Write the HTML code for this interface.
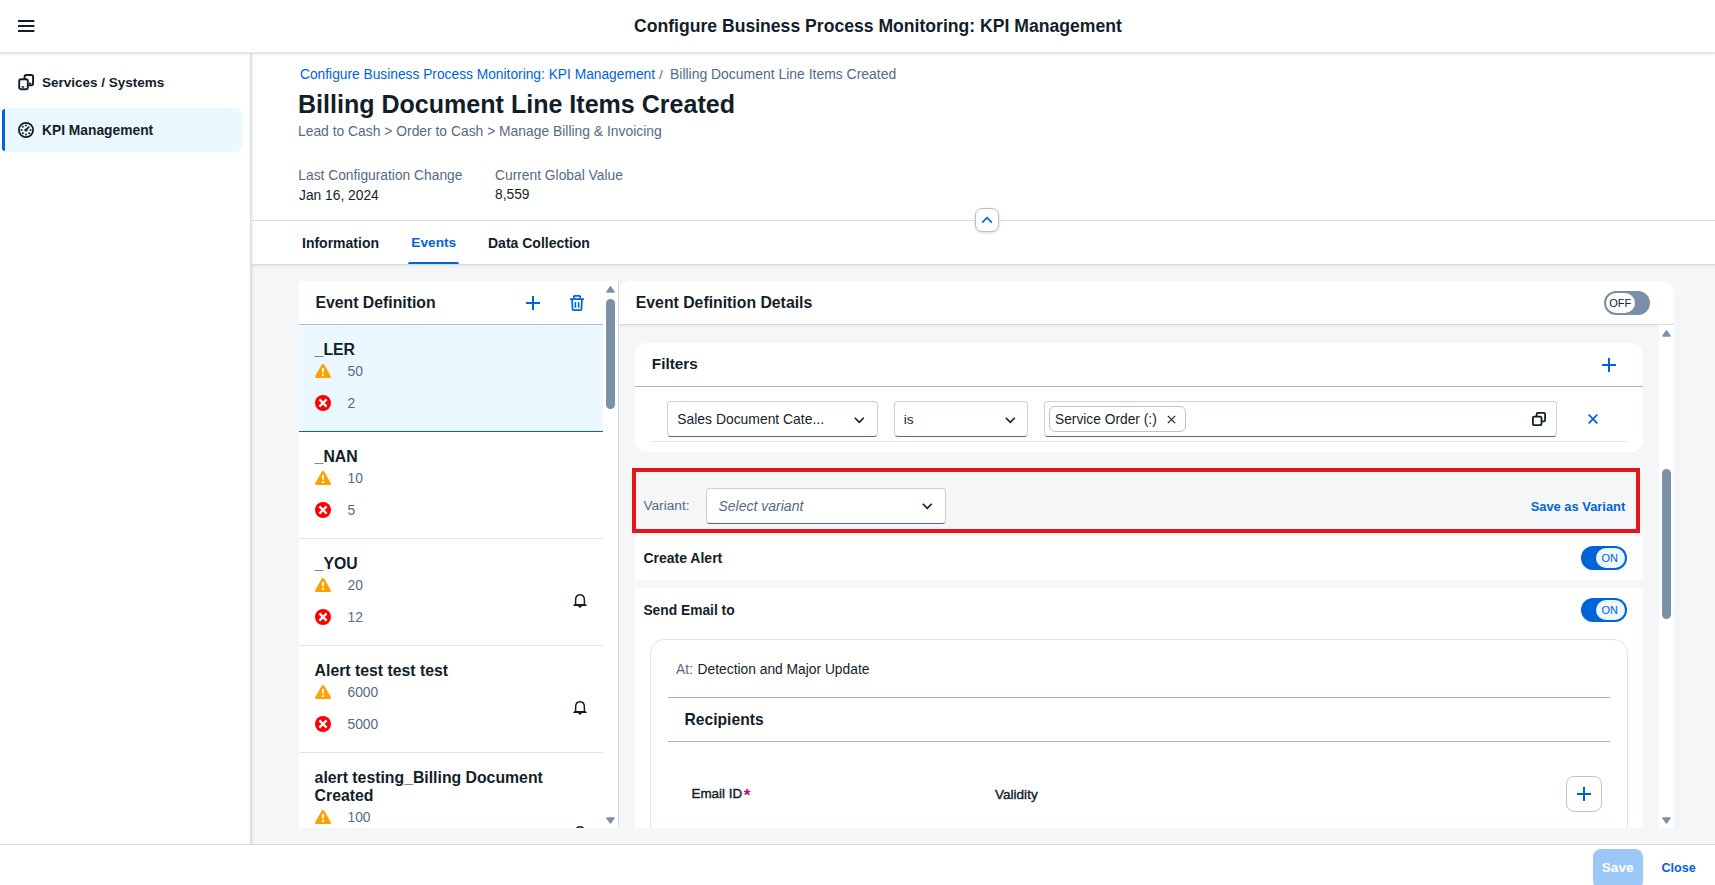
<!DOCTYPE html>
<html><head><meta charset="utf-8">
<style>
*{box-sizing:border-box;margin:0;padding:0}
html,body{width:1715px;height:885px;overflow:hidden;background:#fff;font-family:"Liberation Sans",sans-serif;color:#131e29}
.a{position:absolute;white-space:nowrap}
.b{font-weight:700}
.sec{color:#556b82}
.lnk{color:#0064d9}
svg{display:block;overflow:visible}
</style></head><body>
<div class="a" style="left:0px;top:0px;width:1715px;height:52px;background:#fff"></div>
<div class="a" style="left:0px;top:52px;width:1715px;height:1px;background:#e6e8eb"></div>
<div class="a" style="left:0px;top:53px;width:1715px;height:1px;background:#e3e6e9"></div>
<div class="a" style="left:0px;top:54px;width:1715px;height:2px;background:linear-gradient(rgba(0,0,0,0.04),rgba(0,0,0,0))"></div>
<svg class="a" style="left:18px;top:20px;" width="16" height="12" viewBox="0 0 16 12"><rect x="0" y="0" width="16.4" height="2" fill="#131e29"/><rect x="0" y="5" width="16.4" height="2" fill="#131e29"/><rect x="0" y="10" width="16.4" height="2" fill="#131e29"/></svg>
<div class="a b" style="left:634px;top:18.10px;font-size:17.6px;line-height:17.6px;">Configure Business Process Monitoring: KPI Management</div>
<div class="a" style="left:251px;top:265px;width:1464px;height:579px;background:#f5f6f7"></div>
<div class="a" style="left:250px;top:53px;width:1px;height:791px;background:#d9dcdf"></div>
<div class="a" style="left:251px;top:53px;width:4px;height:791px;background:linear-gradient(90deg,rgba(0,0,0,0.09),rgba(0,0,0,0.03) 50%,rgba(0,0,0,0))"></div>
<svg class="a" style="left:18px;top:74px;" width="16" height="16" viewBox="0 0 16 16"><g fill="none" stroke="#131e29" stroke-width="1.9" stroke-linejoin="round"><rect x="1.2" y="5.2" width="8.6" height="10.0" rx="1.8"/><path d="M6.6 5.2 V2.6 Q6.6 0.95 8.3 0.95 H13.3 Q15.05 0.95 15.05 2.6 V9.6 Q15.05 11.3 13.3 11.3 H9.8"/></g><rect x="3.6" y="12.2" width="2.6" height="1.5" fill="#131e29"/><rect x="11" y="8.6" width="2.2" height="1.4" fill="#131e29"/></svg>
<div class="a b" style="left:42px;top:75.57px;font-size:13.5px;line-height:13.5px;">Services / Systems</div>
<div class="a" style="left:2px;top:108px;width:240px;height:44px;background:#ebf8ff;border-radius:6px"></div>
<div class="a" style="left:2px;top:109px;width:3px;height:42px;background:#0064d9;border-radius:3px 0 0 3px"></div>
<svg class="a" style="left:18px;top:122px;" width="16" height="16" viewBox="0 0 16 16"><circle cx="8" cy="8" r="7.1" fill="none" stroke="#131e29" stroke-width="1.8"/><circle cx="3.50" cy="8.00" r="1.0" fill="#131e29"/><circle cx="4.82" cy="4.82" r="1.0" fill="#131e29"/><circle cx="8.00" cy="3.50" r="1.0" fill="#131e29"/><circle cx="12.50" cy="8.00" r="1.0" fill="#131e29"/><circle cx="11.18" cy="11.18" r="1.0" fill="#131e29"/><circle cx="8.00" cy="12.50" r="1.0" fill="#131e29"/><circle cx="4.82" cy="11.18" r="1.0" fill="#131e29"/><path d="M8 8 L11.2 4.6" stroke="#131e29" stroke-width="1.6"/><circle cx="8" cy="8" r="1.6" fill="#131e29"/></svg>
<div class="a b" style="left:42px;top:124.32px;font-size:13.8px;line-height:13.8px;">KPI Management</div>
<div class="a lnk" style="left:300px;top:67.84px;font-size:13.77px;line-height:13.77px;">Configure Business Process Monitoring: KPI Management</div>
<div class="a sec" style="left:659px;top:67.90px;font-size:13.7px;line-height:13.7px;">/</div>
<div class="a sec" style="left:670px;top:67.69px;font-size:13.95px;line-height:13.95px;">Billing Document Line Items Created</div>
<div class="a b" style="left:298px;top:91.80px;font-size:25.05px;line-height:25.05px;">Billing Document Line Items Created</div>
<div class="a sec" style="left:298px;top:125.26px;font-size:13.87px;line-height:13.87px;">Lead to Cash &gt; Order to Cash &gt; Manage Billing &amp; Invoicing</div>
<div class="a sec" style="left:298.3px;top:168.72px;font-size:13.8px;line-height:13.8px;">Last Configuration Change</div>
<div class="a " style="left:299px;top:189.12px;font-size:13.8px;line-height:13.8px;">Jan 16, 2024</div>
<div class="a sec" style="left:495px;top:168.72px;font-size:13.8px;line-height:13.8px;">Current Global Value</div>
<div class="a " style="left:495px;top:188.32px;font-size:13.8px;line-height:13.8px;">8,559</div>
<div class="a" style="left:251px;top:220px;width:1464px;height:1px;background:#d9dcdf"></div>
<div class="a" style="left:975px;top:208px;width:24px;height:24px;background:#fff;border:1px solid #b8c1ca;border-radius:7px;box-shadow:0 1px 3px rgba(0,0,0,0.15)"></div>
<svg class="a" style="left:981px;top:216px;" width="12" height="8" viewBox="0 0 12 8"><path d="M1.2 6.6 L6 1.6 L10.8 6.6" fill="none" stroke="#0064d9" stroke-width="1.6"/></svg>
<div class="a b" style="left:302px;top:236.15px;font-size:14px;line-height:14px;">Information</div>
<div class="a b lnk" style="left:411.3px;top:236.40px;font-size:13.7px;line-height:13.7px;">Events</div>
<div class="a b" style="left:488px;top:236.15px;font-size:14px;line-height:14px;">Data Collection</div>
<div class="a" style="left:408px;top:262px;width:51px;height:3px;background:#0064d9;border-radius:2px 2px 0 0"></div>
<div class="a" style="left:251px;top:264px;width:1464px;height:1px;background:#d9dcdf"></div>
<div class="a" style="left:251px;top:265px;width:1464px;height:4px;background:linear-gradient(rgba(0,0,0,0.05),rgba(0,0,0,0))"></div>
<div class="a" style="left:0px;top:844px;width:1715px;height:1px;background:#d9dcdf"></div>
<div class="a" style="left:0px;top:845px;width:1715px;height:40px;background:#fff"></div>
<div class="a" style="left:1593px;top:849px;width:50px;height:40px;background:#9cc8f8;border-radius:8px"></div>
<div class="a b" style="left:1601.8px;top:860.79px;font-size:13.6px;line-height:13.6px;color:#fff">Save</div>
<div class="a b lnk" style="left:1661.5px;top:861.63px;font-size:12.6px;line-height:12.6px;">Close</div>
<div class="a" style="left:299px;top:281px;width:320px;height:547px;background:#fff"></div>
<div class="a" style="left:618px;top:281px;width:1px;height:547px;background:#d5dadd"></div>
<div class="a b" style="left:315.4px;top:295.23px;font-size:15.8px;line-height:15.8px;">Event Definition</div>
<svg class="a" style="left:526px;top:296px;" width="14" height="14" viewBox="0 0 14 14"><rect x="0" y="6" width="14" height="2" fill="#0064d9"/><rect x="6" y="0" width="2" height="14" fill="#0064d9"/></svg>
<svg class="a" style="left:570px;top:295px;" width="14" height="16" viewBox="0 0 14 16"><g fill="none" stroke="#0064d9" stroke-width="1.7" stroke-linejoin="round"><path d="M3.8 3.6 V1.6 Q3.8 0.9 4.5 0.9 H9.5 Q10.2 0.9 10.2 1.6 V3.6"/><path d="M2 4.4 L2.6 14.4 Q2.7 15.1 3.4 15.1 H10.6 Q11.3 15.1 11.4 14.4 L12 4.4"/></g><rect x="0" y="3.2" width="14" height="1.8" rx="0.4" fill="#0064d9"/><rect x="4.6" y="7" width="1.6" height="5.8" rx="0.6" fill="#0064d9"/><rect x="7.8" y="7" width="1.6" height="5.8" rx="0.6" fill="#0064d9"/></svg>
<div class="a" style="left:299px;top:324px;width:304px;height:1px;background:#b3bec8"></div>
<div class="a" style="left:299px;top:325px;width:304px;height:503px;overflow:hidden">
<div class="a" style="left:0px;top:0px;width:304px;height:106px;background:#ebf8ff"></div>
<div class="a" style="left:0px;top:106px;width:304px;height:1px;background:#0064d9"></div>
<div class="a b" style="left:15.6px;top:16.63px;font-size:15.8px;line-height:15.8px;">_LER</div>
<svg class="a" style="left:16px;top:39px;" width="16" height="14" viewBox="0 0 16 14"><path d="M8 0 Q8.9 0 9.5 1 L15.7 11.9 Q16.5 14 14.4 14 H1.6 Q-0.5 14 0.3 11.9 L6.5 1 Q7.1 0 8 0 Z" fill="#ffa200"/><rect x="7.05" y="3.9" width="1.9" height="4.6" fill="#fff"/><rect x="7.05" y="10.1" width="1.9" height="1.9" fill="#fff"/></svg>
<div class="a sec" style="left:48.5px;top:39.82px;font-size:13.8px;line-height:13.8px;">50</div>
<svg class="a" style="left:16px;top:70px;" width="16" height="16" viewBox="0 0 16 16"><circle cx="8" cy="8" r="8" fill="#ff0000"/><path d="M4.4 4.4 L11.6 11.6 M11.6 4.4 L4.4 11.6" stroke="#fff" stroke-width="2.2"/></svg>
<div class="a sec" style="left:48.5px;top:71.92px;font-size:13.8px;line-height:13.8px;">2</div>
<div class="a" style="left:0px;top:213px;width:304px;height:1px;background:#e5e5e5"></div>
<div class="a b" style="left:15.6px;top:123.63px;font-size:15.8px;line-height:15.8px;">_NAN</div>
<svg class="a" style="left:16px;top:146px;" width="16" height="14" viewBox="0 0 16 14"><path d="M8 0 Q8.9 0 9.5 1 L15.7 11.9 Q16.5 14 14.4 14 H1.6 Q-0.5 14 0.3 11.9 L6.5 1 Q7.1 0 8 0 Z" fill="#ffa200"/><rect x="7.05" y="3.9" width="1.9" height="4.6" fill="#fff"/><rect x="7.05" y="10.1" width="1.9" height="1.9" fill="#fff"/></svg>
<div class="a sec" style="left:48.5px;top:146.82px;font-size:13.8px;line-height:13.8px;">10</div>
<svg class="a" style="left:16px;top:177px;" width="16" height="16" viewBox="0 0 16 16"><circle cx="8" cy="8" r="8" fill="#ff0000"/><path d="M4.4 4.4 L11.6 11.6 M11.6 4.4 L4.4 11.6" stroke="#fff" stroke-width="2.2"/></svg>
<div class="a sec" style="left:48.5px;top:178.92px;font-size:13.8px;line-height:13.8px;">5</div>
<div class="a" style="left:0px;top:320px;width:304px;height:1px;background:#e5e5e5"></div>
<div class="a b" style="left:15.6px;top:230.63px;font-size:15.8px;line-height:15.8px;">_YOU</div>
<svg class="a" style="left:16px;top:253px;" width="16" height="14" viewBox="0 0 16 14"><path d="M8 0 Q8.9 0 9.5 1 L15.7 11.9 Q16.5 14 14.4 14 H1.6 Q-0.5 14 0.3 11.9 L6.5 1 Q7.1 0 8 0 Z" fill="#ffa200"/><rect x="7.05" y="3.9" width="1.9" height="4.6" fill="#fff"/><rect x="7.05" y="10.1" width="1.9" height="1.9" fill="#fff"/></svg>
<div class="a sec" style="left:48.5px;top:253.82px;font-size:13.8px;line-height:13.8px;">20</div>
<svg class="a" style="left:16px;top:284px;" width="16" height="16" viewBox="0 0 16 16"><circle cx="8" cy="8" r="8" fill="#ff0000"/><path d="M4.4 4.4 L11.6 11.6 M11.6 4.4 L4.4 11.6" stroke="#fff" stroke-width="2.2"/></svg>
<div class="a sec" style="left:48.5px;top:285.92px;font-size:13.8px;line-height:13.8px;">12</div>
<svg class="a" style="left:274px;top:269px;" width="14" height="14" viewBox="0 0 14 14"><g fill="none" stroke="#131e29" stroke-width="1.5"><path d="M2.6 10.6 V6.2 Q2.6 0.8 7 0.8 Q11.4 0.8 11.4 6.2 V10.6"/></g><path d="M0.3 11.1 L1.9 10 H12.1 L13.7 11.1 V11.9 H0.3 Z" fill="#131e29"/><path d="M5.2 12 H8.8 Q8.6 13.8 7 13.8 Q5.4 13.8 5.2 12 Z" fill="#131e29"/></svg>
<div class="a" style="left:0px;top:427px;width:304px;height:1px;background:#e5e5e5"></div>
<div class="a b" style="left:15.6px;top:337.63px;font-size:15.8px;line-height:15.8px;">Alert test test test</div>
<svg class="a" style="left:16px;top:360px;" width="16" height="14" viewBox="0 0 16 14"><path d="M8 0 Q8.9 0 9.5 1 L15.7 11.9 Q16.5 14 14.4 14 H1.6 Q-0.5 14 0.3 11.9 L6.5 1 Q7.1 0 8 0 Z" fill="#ffa200"/><rect x="7.05" y="3.9" width="1.9" height="4.6" fill="#fff"/><rect x="7.05" y="10.1" width="1.9" height="1.9" fill="#fff"/></svg>
<div class="a sec" style="left:48.5px;top:360.82px;font-size:13.8px;line-height:13.8px;">6000</div>
<svg class="a" style="left:16px;top:391px;" width="16" height="16" viewBox="0 0 16 16"><circle cx="8" cy="8" r="8" fill="#ff0000"/><path d="M4.4 4.4 L11.6 11.6 M11.6 4.4 L4.4 11.6" stroke="#fff" stroke-width="2.2"/></svg>
<div class="a sec" style="left:48.5px;top:392.92px;font-size:13.8px;line-height:13.8px;">5000</div>
<svg class="a" style="left:274px;top:376px;" width="14" height="14" viewBox="0 0 14 14"><g fill="none" stroke="#131e29" stroke-width="1.5"><path d="M2.6 10.6 V6.2 Q2.6 0.8 7 0.8 Q11.4 0.8 11.4 6.2 V10.6"/></g><path d="M0.3 11.1 L1.9 10 H12.1 L13.7 11.1 V11.9 H0.3 Z" fill="#131e29"/><path d="M5.2 12 H8.8 Q8.6 13.8 7 13.8 Q5.4 13.8 5.2 12 Z" fill="#131e29"/></svg>
<div class="a" style="left:0px;top:534px;width:304px;height:1px;background:#e5e5e5"></div>
<div class="a b" style="left:15.6px;top:444.63px;font-size:15.8px;line-height:15.8px;">alert testing_Billing Document</div>
<div class="a b" style="left:15.6px;top:462.63px;font-size:15.8px;line-height:15.8px;">Created</div>
<svg class="a" style="left:16px;top:485px;" width="16" height="14" viewBox="0 0 16 14"><path d="M8 0 Q8.9 0 9.5 1 L15.7 11.9 Q16.5 14 14.4 14 H1.6 Q-0.5 14 0.3 11.9 L6.5 1 Q7.1 0 8 0 Z" fill="#ffa200"/><rect x="7.05" y="3.9" width="1.9" height="4.6" fill="#fff"/><rect x="7.05" y="10.1" width="1.9" height="1.9" fill="#fff"/></svg>
<div class="a sec" style="left:48.5px;top:485.82px;font-size:13.8px;line-height:13.8px;">100</div>
<svg class="a" style="left:274px;top:501px;" width="14" height="14" viewBox="0 0 14 14"><g fill="none" stroke="#131e29" stroke-width="1.5"><path d="M2.6 10.6 V6.2 Q2.6 0.8 7 0.8 Q11.4 0.8 11.4 6.2 V10.6"/></g><path d="M0.3 11.1 L1.9 10 H12.1 L13.7 11.1 V11.9 H0.3 Z" fill="#131e29"/><path d="M5.2 12 H8.8 Q8.6 13.8 7 13.8 Q5.4 13.8 5.2 12 Z" fill="#131e29"/></svg>
</div>
<svg class="a" style="left:606px;top:286px;" width="9" height="7" viewBox="0 0 9 7"><path d="M4.5 1.0 L8.0 5.9 H1.0 Z" fill="#7b91a8" stroke="#7b91a8" stroke-width="1.6" stroke-linejoin="round"/></svg>
<div class="a" style="left:606px;top:299px;width:9px;height:110px;background:#7b91a8;border-radius:5px"></div>
<svg class="a" style="left:606px;top:817px;" width="9" height="7" viewBox="0 0 9 7"><path d="M1.0 1.0 H8.0 L4.5 5.9 Z" fill="#7b91a8" stroke="#7b91a8" stroke-width="1.6" stroke-linejoin="round"/></svg>
<div class="a" style="left:619px;top:281px;width:1055px;height:44px;background:#fff;border-radius:12px 12px 0 0"></div>
<div class="a" style="left:619px;top:324px;width:1055px;height:1px;background:#d9dcdf"></div>
<div class="a" style="left:619px;top:325px;width:1040px;height:3px;background:linear-gradient(rgba(0,0,0,0.05),rgba(0,0,0,0))"></div>
<div class="a b" style="left:635.8px;top:295.23px;font-size:15.8px;line-height:15.8px;">Event Definition Details</div>
<div class="a" style="left:1604px;top:291px;width:46px;height:24px;background:#788fa6;border-radius:12px"></div>
<div class="a" style="left:1606px;top:293px;width:29px;height:20px;background:#fff;border-radius:10px"></div>
<div class="a " style="left:1609.3px;top:297.69px;font-size:11px;line-height:11px;color:#131e29">OFF</div>
<div class="a" style="left:1659px;top:325px;width:15px;height:503px;background:#fff"></div>
<svg class="a" style="left:1662px;top:330px;" width="9" height="7" viewBox="0 0 9 7"><path d="M4.5 1.0 L8.0 5.9 H1.0 Z" fill="#7b91a8" stroke="#7b91a8" stroke-width="1.6" stroke-linejoin="round"/></svg>
<div class="a" style="left:1662px;top:469px;width:9px;height:150px;background:#7b91a8;border-radius:5px"></div>
<svg class="a" style="left:1662px;top:817px;" width="9" height="7" viewBox="0 0 9 7"><path d="M1.0 1.0 H8.0 L4.5 5.9 Z" fill="#7b91a8" stroke="#7b91a8" stroke-width="1.6" stroke-linejoin="round"/></svg>
<div class="a" style="left:635px;top:343px;width:1008px;height:109px;background:#fff;border-radius:12px"></div>
<div class="a b" style="left:651.8px;top:356.35px;font-size:15.3px;line-height:15.3px;">Filters</div>
<svg class="a" style="left:1602px;top:358px;" width="14" height="14" viewBox="0 0 14 14"><rect x="0" y="6" width="14" height="2" fill="#0064d9"/><rect x="6" y="0" width="2" height="14" fill="#0064d9"/></svg>
<div class="a" style="left:635px;top:386px;width:1008px;height:1px;background:#a9b4be"></div>
<div class="a" style="left:667px;top:401px;width:211px;height:36px;background:#fff;border:1px solid #c9d0d6;border-bottom:1px solid #556b82;border-radius:4px"></div>
<div class="a " style="left:677.3px;top:412.73px;font-size:13.9px;line-height:13.9px;">Sales Document Cate...</div>
<svg class="a" style="left:854px;top:417px;" width="11" height="7" viewBox="0 0 11 7"><path d="M0.8 0.8 L5.3 5.4 L9.8 0.8" fill="none" stroke="#131e29" stroke-width="1.6"/></svg>
<div class="a" style="left:894px;top:401px;width:134px;height:36px;background:#fff;border:1px solid #c9d0d6;border-bottom:1px solid #556b82;border-radius:4px"></div>
<div class="a " style="left:903.7px;top:412.90px;font-size:13.7px;line-height:13.7px;">is</div>
<svg class="a" style="left:1005px;top:417px;" width="11" height="7" viewBox="0 0 11 7"><path d="M0.8 0.8 L5.3 5.4 L9.8 0.8" fill="none" stroke="#131e29" stroke-width="1.6"/></svg>
<div class="a" style="left:1044px;top:401px;width:513px;height:36px;background:#fff;border:1px solid #c9d0d6;border-bottom:1px solid #556b82;border-radius:4px"></div>
<div class="a" style="left:1049px;top:406px;width:137px;height:26px;background:#fff;border:1px solid #bcc3ca;border-radius:6px"></div>
<div class="a " style="left:1055px;top:413.34px;font-size:13.78px;line-height:13.78px;">Service Order (:)</div>
<svg class="a" style="left:1167px;top:415px;" width="9" height="9" viewBox="0 0 9 9"><path d="M0.8 0.8 L8.2 8.2 M8.2 0.8 L0.8 8.2" stroke="#131e29" stroke-width="1.15"/></svg>
<svg class="a" style="left:1532px;top:412px;" width="14" height="14" viewBox="0 0 14 14"><g fill="none" stroke="#131e29" stroke-width="1.8" stroke-linejoin="round"><rect x="0.9" y="4.6" width="8.6" height="8.6" rx="1.3"/><path d="M4.6 4.6 V2.2 Q4.6 0.9 5.9 0.9 H11.8 Q13.1 0.9 13.1 2.2 V8.1 Q13.1 9.4 11.8 9.4 H9.5"/></g></svg>
<svg class="a" style="left:1588px;top:414px;" width="10" height="10" viewBox="0 0 10 10"><path d="M0.7 0.7 L9.3 9.3 M9.3 0.7 L0.7 9.3" stroke="#0064d9" stroke-width="1.7"/></svg>
<div class="a" style="left:651px;top:441px;width:976px;height:1px;background:#e5e5e5"></div>
<div class="a" style="left:632px;top:468px;width:1008px;height:65px;border:4px solid #e4171d"></div>
<div class="a sec" style="left:643.4px;top:499.10px;font-size:13.7px;line-height:13.7px;">Variant:</div>
<div class="a" style="left:706px;top:488px;width:240px;height:36px;background:#fff;border:1px solid #c9d0d6;border-bottom:1px solid #556b82;border-radius:4px"></div>
<div class="a sec" style="left:718.5px;top:499.25px;font-size:14px;line-height:14px;font-style:italic">Select variant</div>
<svg class="a" style="left:922px;top:503px;" width="11" height="7" viewBox="0 0 11 7"><path d="M0.8 0.8 L5.3 5.4 L9.8 0.8" fill="none" stroke="#131e29" stroke-width="1.6"/></svg>
<div class="a b lnk" style="left:1530.7px;top:500.88px;font-size:12.9px;line-height:12.9px;">Save as Variant</div>
<div class="a" style="left:635px;top:536px;width:1008px;height:44px;background:#fff"></div>
<div class="a b" style="left:643.4px;top:551.05px;font-size:14px;line-height:14px;">Create Alert</div>
<div class="a" style="left:1581px;top:546px;width:46px;height:24px;background:#0064d9;border-radius:12px"></div>
<div class="a" style="left:1596px;top:548px;width:29px;height:20px;background:#ebf8ff;border-radius:10px"></div>
<div class="a lnk" style="left:1601.5px;top:552.69px;font-size:11px;line-height:11px;">ON</div>
<div class="a" style="left:635px;top:588px;width:1008px;height:240px;background:#fff"></div>
<div class="a b" style="left:643.4px;top:603.52px;font-size:13.8px;line-height:13.8px;">Send Email to</div>
<div class="a" style="left:1581px;top:598px;width:46px;height:24px;background:#0064d9;border-radius:12px"></div>
<div class="a" style="left:1596px;top:600px;width:29px;height:20px;background:#ebf8ff;border-radius:10px"></div>
<div class="a lnk" style="left:1601.5px;top:604.69px;font-size:11px;line-height:11px;">ON</div>
<div class="a" style="left:635px;top:588px;width:1008px;height:240px;overflow:hidden">
<div class="a" style="left:15px;top:51px;width:978px;height:260px;border:1px solid #e1e5e8;border-radius:14px"></div>
</div>
<div class="a sec" style="left:676.1px;top:663.42px;font-size:13.8px;line-height:13.8px;">At:</div>
<div class="a " style="left:697.6px;top:663.42px;font-size:13.8px;line-height:13.8px;">Detection and Major Update</div>
<div class="a" style="left:668px;top:697px;width:942px;height:1px;background:#a9b4be"></div>
<div class="a b" style="left:684.5px;top:711.75px;font-size:15.65px;line-height:15.65px;">Recipients</div>
<div class="a" style="left:668px;top:741px;width:942px;height:1px;background:#a9b4be"></div>
<div class="a " style="left:691.5px;top:787.26px;font-size:13.4px;line-height:13.4px;-webkit-text-stroke:0.4px #131e29">Email ID</div>
<div class="a b" style="left:743.8px;top:787.11px;font-size:17px;line-height:17px;color:#c0077a">*</div>
<div class="a " style="left:995.0px;top:787.83px;font-size:13.55px;line-height:13.55px;-webkit-text-stroke:0.4px #131e29">Validity</div>
<div class="a" style="left:1566px;top:776px;width:36px;height:36px;background:#fff;border:1px solid #bcc3ca;border-radius:8px"></div>
<svg class="a" style="left:1577px;top:787px;" width="14" height="14" viewBox="0 0 14 14"><rect x="0" y="6" width="14" height="2" fill="#0064d9"/><rect x="6" y="0" width="2" height="14" fill="#0064d9"/></svg>
</body></html>
